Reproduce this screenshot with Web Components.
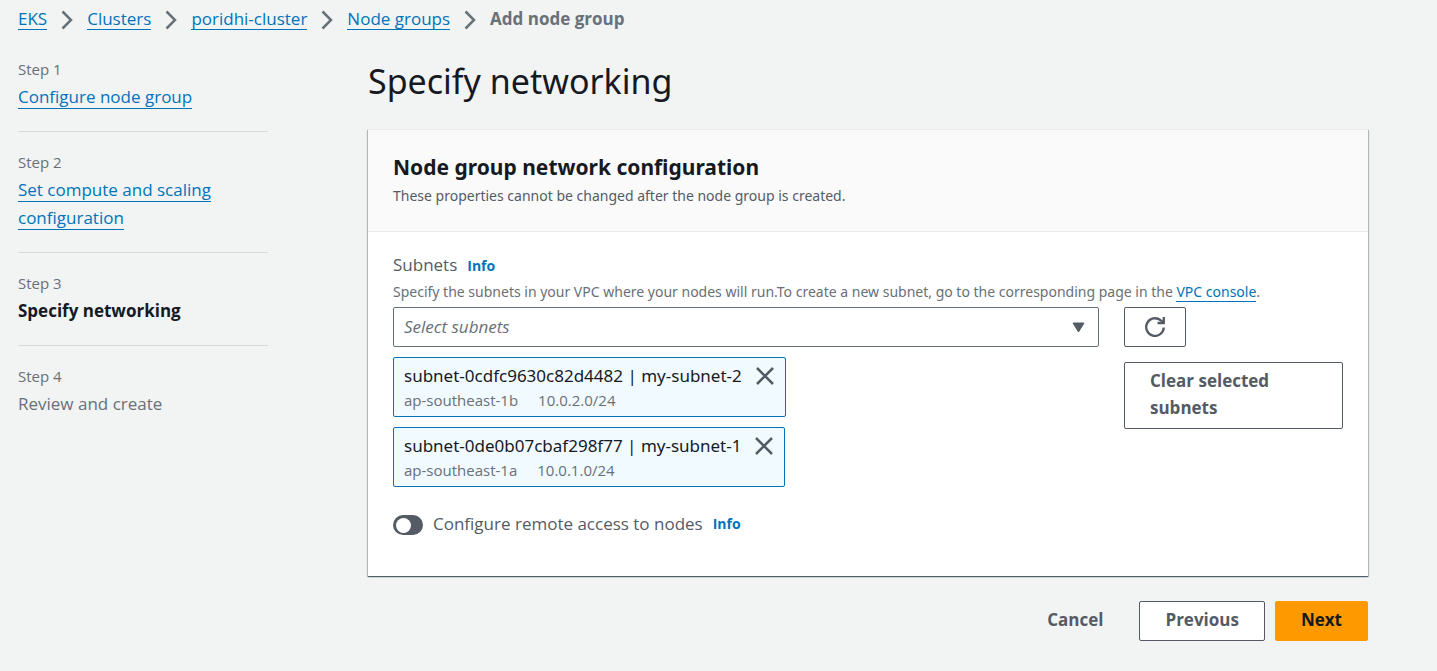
<!DOCTYPE html>
<html lang="en">
<head>
<meta charset="utf-8">
<meta name="viewport" content="width=device-width, initial-scale=1">
<title>Add node group</title>
<style>
  :root {
    --text: #16191f; --muted: #687078; --body: #545b64; --link: #0073bb;
    --md: 17px; --sm: 15px;
    --dense: "Noto Sans", "Open Sans", sans-serif;
  }
  body { margin: 0; background: #f2f3f3; color: var(--text); font: 17px/28px "Open Sans", "Noto Sans", sans-serif; }
</style>
</head>
<body>
<wizard-page>
  <bread-crumbs slot="top">
    <crumb-item href="#eks">EKS</crumb-item>
    <crumb-item href="#clusters">Clusters</crumb-item>
    <crumb-item href="#cluster">poridhi-cluster</crumb-item>
    <crumb-item href="#groups">Node groups</crumb-item>
    <crumb-item>Add node group</crumb-item>
  </bread-crumbs>
  <wizard-step slot="steps" label="Step 1" href="#step-1">Configure node group</wizard-step>
  <wizard-step slot="steps" label="Step 2" href="#step-2">Set compute and scaling configuration</wizard-step>
  <wizard-step slot="steps" label="Step 3" current>Specify networking</wizard-step>
  <wizard-step slot="steps" label="Step 4">Review and create</wizard-step>
  <span slot="title">Specify networking</span>
  <form-card>
    <span slot="heading">Node group network configuration</span>
    <span slot="description">These properties cannot be changed after the node group is created.</span>
    <subnet-field>
      <subnet-token zone="ap-southeast-1b" cidr="10.0.2.0/24">subnet-0cdfc9630c82d4482 | my-subnet-2</subnet-token>
      <subnet-token zone="ap-southeast-1a" cidr="10.0.1.0/24">subnet-0de0b07cbaf298f77 | my-subnet-1</subnet-token>
    </subnet-field>
    <toggle-field>Configure remote access to nodes</toggle-field>
  </form-card>
  <ui-button slot="actions" variant="link">Cancel</ui-button>
  <ui-button slot="actions">Previous</ui-button>
  <ui-button slot="actions" variant="primary">Next</ui-button>
</wizard-page>
<script>
const define = (name, render) => customElements.define(name, class extends HTMLElement {
  connectedCallback() {
    if (this.shadowRoot) return;
    this.attachShadow({ mode: 'open' }).innerHTML =
      '<style>*{box-sizing:border-box}</style>' + render(this);
  }
});

define('wizard-page', () => `
  <style>
    :host { display: block; padding: 5px 69px 30px 18px; }
    .layout { display: grid; grid-template-columns: 250px minmax(0, 1fr); column-gap: 100px; padding-top: 26px; }
    h1 { margin: 0 0 26px; font: 400 34px/44px var(--dense); }
    footer { display: flex; justify-content: flex-end; gap: 10px; padding-top: 25px; }
  </style>
  <slot name="top"></slot>
  <div class="layout">
    <nav aria-label="Steps"><slot name="steps"></slot></nav>
    <main>
      <h1><slot name="title"></slot></h1>
      <slot></slot>
      <footer><slot name="actions"></slot></footer>
    </main>
  </div>`);

define('bread-crumbs', () => `
  <style>:host { display: block; } nav { display: flex; flex-wrap: wrap; }</style>
  <nav aria-label="Breadcrumbs"><slot></slot></nav>`);

define('crumb-item', el => `
  <style>
    :host { display: flex; align-items: center; font-size: var(--md); }
    a { color: var(--link); text-decoration: none; border-bottom: 1px solid; line-height: 20px; }
    b { color: var(--muted); }
    svg { display: block; margin: 2px 14px 0; }
  </style>
  ${el.hasAttribute('href')
    ? `<a href="${el.getAttribute('href')}"><slot></slot></a>
       <svg width="12" height="20" viewBox="0 0 12 20" fill="none" stroke="#687078" stroke-width="2.5" aria-hidden="true"><path d="M1.5 1.5 10 10 1.5 18.5"/></svg>`
    : '<b><slot></slot></b>'}`);

define('wizard-step', el => {
  const tag = el.hasAttribute('href') ? 'a' : 'span';
  return `
  <style>
    :host { display: block; padding: 20px 0; border-bottom: 1px solid #d5dbdb; }
    :host(:first-of-type) { padding-top: 0; }
    :host(:last-of-type) { border-bottom: 0; }
    small { display: block; margin-bottom: 4px; color: var(--muted); font-size: var(--sm); line-height: 20px; }
    div { font-size: var(--md); line-height: 28px; color: var(--muted); }
    a { color: var(--link); text-decoration: none; border-bottom: 1px solid; }
    :host([current]) div { color: var(--text); font-weight: 700; }
  </style>
  <small>${el.getAttribute('label')}</small>
  <div><${tag}${tag === 'a' ? ` href="${el.getAttribute('href')}"` : ''}><slot></slot></${tag}></div>`;
});

define('form-card', () => `
  <style>
    :host { display: block; background: #fff; border-top: 1px solid #eaeded;
      box-shadow: 0 1px 1px 0 rgba(0,28,36,.5), 1px 1px 1px 0 rgba(0,28,36,.2), -1px 1px 1px 0 rgba(0,28,36,.2); }
    header { padding: 23px 25px 25px; background: #fafafa; border-bottom: 1px solid #eaeded; }
    h2 { margin: 0; font: 700 21px/28px var(--dense); }
    p { margin: 5px 0 0; color: var(--body); font: 14px/20px var(--dense); }
    .content { padding: 19px 25px 38px; }
  </style>
  <header><h2><slot name="heading"></slot></h2><p><slot name="description"></slot></p></header>
  <div class="content"><slot></slot></div>`);

define('info-link', () => `
  <style>
    :host { display: inline-block; margin-left: 10px; font-size: 14px; font-weight: 700; }
    a { color: var(--link); text-decoration: none; }
  </style>
  <a href="#info">Info</a>`);

define('ui-button', () => `
  <style>
    :host { display: block; }
    button { display: block; width: 100%; min-height: 40px; padding: 4px 25px 7px; border: 1px solid var(--body); border-radius: 2px;
      background: #fff; color: var(--body); font: 700 17px/27px "Open Sans", "Noto Sans", sans-serif; text-align: left; cursor: pointer; }
    :host([variant=link]) button { background: none; border-color: transparent; }
    :host([variant=primary]) button { background: #f90; border-color: #f90; color: var(--text); }
    :host([variant=icon]) button { display: grid; place-items: center; padding: 0; }
    ::slotted(svg) { display: block; }
  </style>
  <button type="button"><slot></slot></button>`);

define('subnet-token', el => `
  <style>
    :host { display: grid; grid-template-columns: auto auto; column-gap: 13px; width: fit-content; padding: 4px 10px 5px;
      border: 1px solid var(--link); border-radius: 2px; background: #f1faff; }
    .name { font: 17px/28px var(--dense); }
    .meta { display: flex; gap: 20px; color: var(--muted); font-size: var(--sm); line-height: 21px; }
    button { align-self: center; padding: 0; border: 0; background: none; cursor: pointer; }
    svg { display: block; }
  </style>
  <div class="name"><slot></slot></div>
  <button type="button" aria-label="Remove subnet"><svg width="20" height="20" viewBox="0 0 20 20" fill="none" stroke="#545b64" stroke-width="2.5"><path d="m2 2 16 16M18 2 2 18"/></svg></button>
  <div class="meta"><span>${el.getAttribute('zone')}</span><span>${el.getAttribute('cidr')}</span></div>`);

define('subnet-field', () => `
  <style>
    :host { display: block; }
    .label { color: var(--body); line-height: 28px; }
    p { margin: 2px 0 5px; color: var(--muted); font: 14px/20px var(--dense); }
    p a { color: var(--link); text-decoration: none; border-bottom: 1px solid; }
    .row { display: grid; grid-template-columns: minmax(0, 1fr) 219px; gap: 25px; align-items: start; }
    .left { display: grid; gap: 10px; }
    .right { display: grid; gap: 15px; }
    .pick { display: grid; align-items: center; }
    .pick > * { grid-area: 1 / 1; }
    .pick svg { justify-self: end; margin-right: 14px; pointer-events: none; }
    select { appearance: none; width: 100%; height: 40px; padding: 0 10px; border: 1px solid #687078; border-radius: 2px;
      background: #fff; color: var(--muted); font: italic 17px/28px "Open Sans", "Noto Sans", sans-serif; }
    .refresh { width: 62px; }
  </style>
  <div class="label"><label for="subnets">Subnets</label><info-link></info-link></div>
  <p>Specify the subnets in your VPC where your nodes will run.To create a new subnet, go to the corresponding page in the <a href="#vpc">VPC console</a>.</p>
  <div class="row">
    <div class="left">
      <div class="pick">
        <select id="subnets"><option>Select subnets</option></select>
        <svg width="13" height="11" viewBox="0 0 13 11" fill="#545b64" stroke="#545b64" stroke-linejoin="round" aria-hidden="true"><path d="M1 1h11L6.5 10z"/></svg>
      </div>
      <slot></slot>
    </div>
    <div class="right">
      <ui-button class="refresh" variant="icon"><svg role="img" aria-label="Refresh" width="20" height="20" viewBox="0 0 20 20" fill="none" stroke="#545b64" stroke-width="2.3"><path d="M18.8 10.5A8.8 8.8 0 1 1 15.500 3.200L18 5"/><path d="M18.800 0v6H12.500"/></svg></ui-button>
      <ui-button>Clear selected subnets</ui-button>
    </div>
  </div>`);

define('toggle-field', () => `
  <style>
    :host { display: flex; align-items: center; margin-top: 23px; color: var(--body); line-height: 28px; }
    input { appearance: none; display: grid; align-items: center; width: 30px; height: 20px; margin: 2px 10px 0 0; padding: 0 3px;
      border-radius: 10px; background: var(--body); }
    input::before { content: ""; width: 15px; height: 15px; border-radius: 50%; background: #fff; }
    input:checked { background: var(--link); justify-items: end; }
  </style>
  <input type="checkbox" role="switch" id="toggle"><label for="toggle"><slot></slot></label><info-link></info-link>`);
</script>
</body>
</html>
